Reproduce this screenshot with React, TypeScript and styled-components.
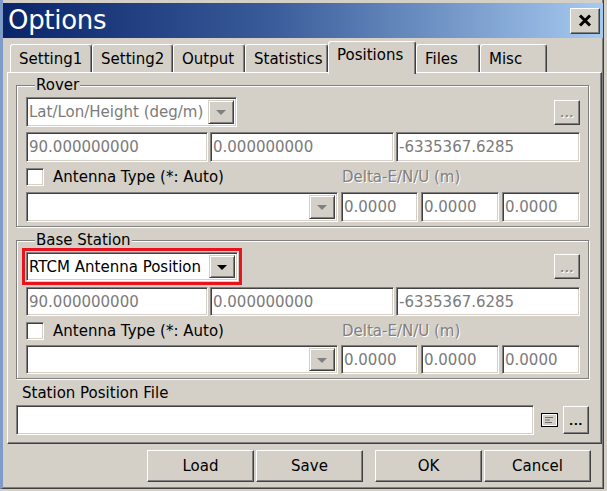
import React from "react";
import styled, { createGlobalStyle } from "styled-components";

const GlobalStyle = createGlobalStyle`
  html, body { margin: 0; padding: 0; background: #d4d0c8; }
  body {
    font-family: "DejaVu Sans", Tahoma, sans-serif;
    font-size: 15px;
    color: #000;
  }
`;

const Window = styled.div`
  width: 604px;
  height: 489px;
  box-sizing: border-box;
  background: #d4d0c8;
  border-left: 3px solid #7f9cc9;
  border-right: 1px solid #404040;
  border-bottom: 1px solid #404040;
  box-shadow: inset -1px -1px 0 #808080;
  padding-top: 3px;
  display: flex;
  flex-direction: column;
`;

const TitleBar = styled.div`
  height: 35px;
  flex: none;
  display: flex;
  align-items: center;
  justify-content: space-between;
  padding: 0 3px 0 5px;
  background: linear-gradient(to right, #0a246a 0%, #3a5c9a 45%, #a6caf0 100%);
`;

const TitleText = styled.span`
  color: #fff;
  font-size: 26px;
  line-height: 35px;
  letter-spacing: -0.3px;
`;

const CloseBtn = styled.div`
  width: 30px;
  height: 26px;
  box-sizing: border-box;
  background: #d4d0c8;
  border: 1px solid;
  border-color: #fff #404040 #404040 #fff;
  box-shadow: inset -1px -1px 0 #808080;
  display: flex;
  align-items: center;
  justify-content: center;
`;

const Body = styled.div`
  flex: 1;
  display: flex;
  flex-direction: column;
  padding: 3px 1px 0 4px;
`;

const TabRow = styled.div`
  height: 31px;
  display: flex;
  align-items: flex-end;
  margin-left: 3px;
  position: relative;
  z-index: 1;
`;

const Tab = styled.div<{ $w: number; $active?: boolean }>`
  box-sizing: border-box;
  width: ${(p) => p.$w}px;
  height: ${(p) => (p.$active ? 33 : 28)}px;
  margin-bottom: ${(p) => (p.$active ? -2 : 0)}px;
  padding: ${(p) => (p.$active ? "5px 0 0 8px" : "6px 0 0 8px")};
  background: #d4d0c8;
  border-top: 1px solid #fff;
  border-left: 1px solid #fff;
  border-right: 1px solid #404040;
  border-radius: 3px 3px 0 0;
  box-shadow: inset -1px 0 0 #808080;
  white-space: nowrap;
  line-height: 17px;
`;

const Panel = styled.div`
  height: 372px;
  box-sizing: border-box;
  border: 1px solid;
  border-color: #fff #404040 #404040 #fff;
  box-shadow: inset -1px -1px 0 #808080;
  padding: 4px 12px 0 8px;
  display: flex;
  flex-direction: column;
`;

const Group = styled.fieldset<{ $top?: number }>`
  margin: ${(p) => p.$top ?? 0}px 0 0 0;
  padding: 3px 8px 4px 9px;
  border: 1px solid #808080;
  box-shadow: inset 1px 1px 0 #fff, 1px 1px 0 #fff;
  min-width: 0;
`;

const Legend = styled.legend`
  margin-left: 9px;
  padding: 0 1px;
  line-height: 17px;
  background: #d4d0c8;
`;

const Row = styled.div<{ $h: number; $mt?: number }>`
  height: ${(p) => p.$h}px;
  margin-top: ${(p) => p.$mt ?? 0}px;
  display: flex;
  align-items: center;
`;

const CoordGrid = styled.div<{ $h: number; $mt?: number }>`
  height: ${(p) => p.$h}px;
  margin-top: ${(p) => p.$mt ?? 0}px;
  display: grid;
  grid-template-columns: 182px 184px 1fr;
  gap: 2px;
`;

const DeltaGrid = styled.div<{ $h: number }>`
  height: ${(p) => p.$h}px;
  display: grid;
  grid-template-columns: 312px 77px 78px 1fr;
  gap: 3px;
`;

const LabelGrid = styled.div<{ $h: number }>`
  height: ${(p) => p.$h}px;
  display: grid;
  grid-template-columns: 313px 1fr;
  gap: 3px;
  align-items: center;
`;

const Field = styled.div<{ $disabled?: boolean; $w?: number; $flex?: boolean }>`
  box-sizing: border-box;
  height: 100%;
  ${(p) => (p.$w ? `width: ${p.$w}px;` : "")}
  ${(p) => (p.$flex ? "flex: 1;" : "")}
  background: #fff;
  border: 1px solid;
  border-color: #808080 #fff #fff #808080;
  box-shadow: inset 1px 1px 0 #404040, inset -1px -1px 0 #d4d0c8;
  padding: 0 0 0 2px;
  display: flex;
  align-items: center;
  color: ${(p) => (p.$disabled ? "#7b7b7b" : "#000")};
  white-space: nowrap;
  overflow: hidden;
`;

const Combo = styled(Field)<{ $mark?: boolean }>`
  padding: 2px;
  outline: ${(p) => (p.$mark ? "3px solid #e8131d" : "none")};
  outline-offset: 1px;
`;

const ComboText = styled.span`
  flex: 1;
  overflow: hidden;
`;

const DropBtn = styled.span<{ $disabled?: boolean }>`
  width: 26px;
  height: 100%;
  flex: none;
  box-sizing: border-box;
  background: #d4d0c8;
  border: 1px solid;
  border-color: #d4d0c8 #404040 #404040 #d4d0c8;
  box-shadow: inset 1px 1px 0 #fff, inset -1px -1px 0 #808080;
  display: flex;
  align-items: center;
  justify-content: center;
  &::after {
    content: "";
    border-left: 5px solid transparent;
    border-right: 5px solid transparent;
    border-top: 5px solid ${(p) => (p.$disabled ? "#808080" : "#000")};
    margin-top: 1px;
  }
`;

const DotsBtn = styled.div<{ $disabled?: boolean; $h?: number }>`
  width: 26px;
  height: ${(p) => p.$h ?? 25}px;
  box-sizing: border-box;
  flex: none;
  margin-left: auto;
  background: #d4d0c8;
  border: 1px solid;
  border-color: #fff #404040 #404040 #fff;
  box-shadow: inset -1px -1px 0 #808080;
  display: flex;
  align-items: center;
  justify-content: center;
  font-size: 11px;
  font-weight: bold;
  letter-spacing: 0.5px;
  color: ${(p) => (p.$disabled ? "#8a8a8a" : "#000")};
  text-shadow: ${(p) => (p.$disabled ? "1px 1px 0 #fff" : "none")};
  padding-top: 3px;
`;

const Check = styled.span`
  width: 18px;
  height: 18px;
  box-sizing: border-box;
  flex: none;
  background: #fff;
  border: 1px solid;
  border-color: #808080 #fff #fff #808080;
  box-shadow: inset 1px 1px 0 #404040, inset -1px -1px 0 #d4d0c8;
  margin-right: 9px;
`;

const CheckLabel = styled.label`
  display: flex;
  align-items: center;
`;

const DisabledLabel = styled.span`
  color: #808080;
  text-shadow: 1px 1px 0 #fff;
`;

const PlainLabel = styled.div`
  margin: 6px 0 0 6px;
  line-height: 17px;
`;

const FileRow = styled.div`
  height: 30px;
  margin-top: 3px;
  display: flex;
  align-items: center;
`;

const FileIcon = styled.svg`
  flex: none;
  margin: 0 5px 0 7px;
`;

const Footer = styled.div`
  display: flex;
  justify-content: flex-end;
  gap: 12px;
  padding: 6px 11px 0 0;
`;

const BtnGroup = styled.div`
  display: flex;
  gap: 2px;
`;

const Button = styled.div`
  width: 107px;
  height: 32px;
  box-sizing: border-box;
  background: #d4d0c8;
  border: 1px solid;
  border-color: #fff #404040 #404040 #fff;
  box-shadow: inset -1px -1px 0 #808080;
  display: flex;
  align-items: center;
  justify-content: center;
`;

const tabs = [
  { label: "Setting1", w: 82 },
  { label: "Setting2", w: 81 },
  { label: "Output", w: 72 },
  { label: "Statistics", w: 83 },
  { label: "Positions", w: 88, active: true },
  { label: "Files", w: 64 },
  { label: "Misc", w: 67 },
];

function PositionGroup(props: {
  title: string;
  mode: string;
  modeEnabled?: boolean;
  top?: number;
  h: number;
  first: number;
  gap: number;
}) {
  const { title, mode, modeEnabled, top, h, first, gap } = props;
  return (
    <Group $top={top}>
      <Legend>{title}</Legend>
      <Row $h={first}>
        <Combo $w={modeEnabled ? 212 : 211} $disabled={!modeEnabled} $mark={modeEnabled}>
          <ComboText>{mode}</ComboText>
          <DropBtn $disabled={!modeEnabled} />
        </Combo>
        <DotsBtn $disabled>...</DotsBtn>
      </Row>
      <CoordGrid $h={h} $mt={gap}>
        <Field $disabled>90.000000000</Field>
        <Field $disabled>0.000000000</Field>
        <Field $disabled>-6335367.6285</Field>
      </CoordGrid>
      <LabelGrid $h={h}>
        <CheckLabel>
          <Check />
          Antenna Type (*: Auto)
        </CheckLabel>
        <DisabledLabel>Delta-E/N/U (m)</DisabledLabel>
      </LabelGrid>
      <DeltaGrid $h={h}>
        <Combo $disabled>
          <ComboText />
          <DropBtn $disabled />
        </Combo>
        <Field $disabled>0.0000</Field>
        <Field $disabled>0.0000</Field>
        <Field $disabled>0.0000</Field>
      </DeltaGrid>
    </Group>
  );
}

export default function App() {
  return (
    <>
      <GlobalStyle />
      <Window>
        <TitleBar>
          <TitleText>Options</TitleText>
          <CloseBtn>
            <svg width="14" height="13" viewBox="0 0 14 13">
              <path d="M2 1.5 L12 11.5 M12 1.5 L2 11.5" stroke="#000" strokeWidth="3" />
            </svg>
          </CloseBtn>
        </TitleBar>
        <Body>
          <TabRow>
            {tabs.map((t) => (
              <Tab key={t.label} $w={t.w} $active={t.active}>
                {t.label}
              </Tab>
            ))}
          </TabRow>
          <Panel>
            <PositionGroup title="Rover" mode="Lat/Lon/Height (deg/m)" h={30} first={30} gap={5} />
            <PositionGroup
              title="Base Station"
              mode="RTCM Antenna Position"
              modeEnabled
              top={5}
              h={29}
              first={29}
              gap={6}
            />
            <PlainLabel>Station Position File</PlainLabel>
            <FileRow>
              <Field $flex />
              <FileIcon width="17" height="14" viewBox="0 0 17 14">
                <rect x="0.5" y="0.5" width="16" height="13" fill="#d4d0c8" stroke="#000" />
                <rect x="1.5" y="1.5" width="14" height="11" fill="none" stroke="#fff" />
                <path d="M4 4.5 H12 M4 7 H9 M4 9.5 H11" stroke="#6e6e6e" strokeWidth="1.2" />
              </FileIcon>
              <DotsBtn $h={28}>...</DotsBtn>
            </FileRow>
          </Panel>
          <Footer>
            <BtnGroup>
              <Button>Load</Button>
              <Button>Save</Button>
            </BtnGroup>
            <BtnGroup>
              <Button>OK</Button>
              <Button>Cancel</Button>
            </BtnGroup>
          </Footer>
        </Body>
      </Window>
    </>
  );
}
